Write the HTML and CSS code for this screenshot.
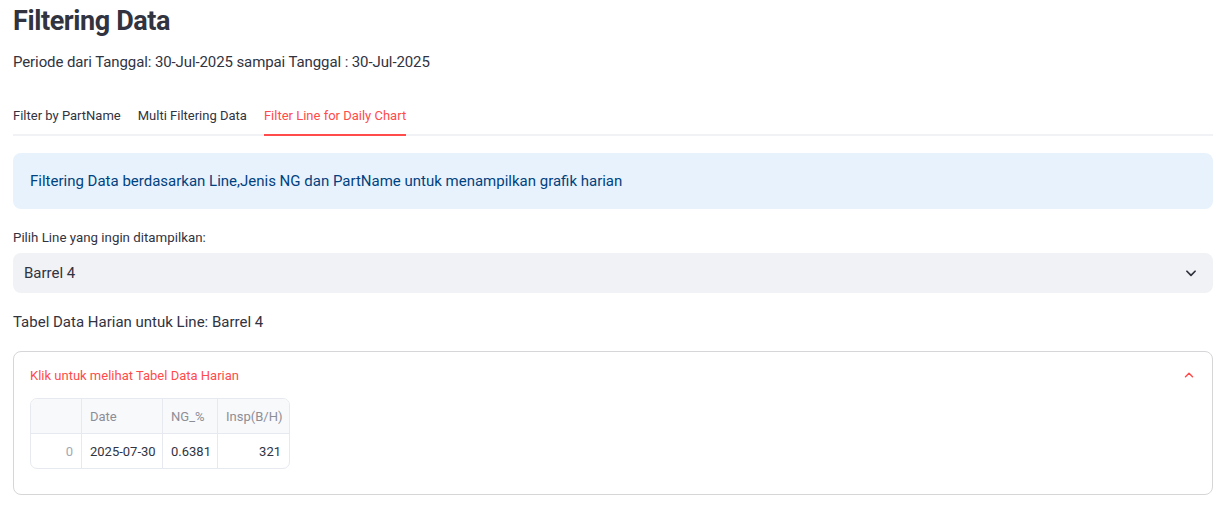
FILE: index.html
```html
<!DOCTYPE html>
<html lang="en">
<head>
    <meta charset="UTF-8">
    <meta name="viewport" content="width=device-width, initial-scale=1.0">
    <title>Filtering Data</title>
    <link rel="stylesheet" href="styles.css">
</head>
<body>
    <div class="main">
        <h1 class="title">Filtering Data</h1>
        <p class="period">Periode dari Tanggal: 30-Jul-2025 sampai Tanggal : 30-Jul-2025</p>

        <div class="tabs">
            <span class="tab">Filter by PartName</span>
            <span class="tab">Multi Filtering Data</span>
            <span class="tab active">Filter Line for Daily Chart</span>
        </div>

        <div class="info">Filtering Data berdasarkan Line,Jenis NG dan PartName untuk menampilkan grafik harian</div>

        <label class="label">Pilih Line yang ingin ditampilkan:</label>
        <div class="select">
            <span>Barrel 4</span>
            <svg width="14" height="14" viewBox="0 0 24 24"><path d="M5 9l7 7 7-7" fill="none" stroke="#31333f" stroke-width="3" stroke-linecap="round" stroke-linejoin="round"/></svg>
        </div>

        <p class="subtitle">Tabel Data Harian untuk Line: Barrel 4</p>

        <div class="expander">
            <div class="exp-head">
                <span>Klik untuk melihat Tabel Data Harian</span>
                <svg width="14" height="14" viewBox="0 0 24 24"><path d="M6 15l6-6 6 6" fill="none" stroke="#ff4b4b" stroke-width="2.5" stroke-linecap="round" stroke-linejoin="round"/></svg>
            </div>
            <table class="grid">
                <tr>
                    <th class="idx"></th>
                    <th class="c-date">Date</th>
                    <th class="c-ng">NG_%</th>
                    <th class="c-insp">Insp(B/H)</th>
                </tr>
                <tr>
                    <td class="idx num">0</td>
                    <td>2025-07-30</td>
                    <td>0.6381</td>
                    <td class="num">321</td>
                </tr>
            </table>
        </div>
    </div>
</body>
</html>
```

FILE: styles.css
```css
body {
    margin: 0;
    background-color: #FFFFFF;
    color: #31333F;
    font-family: Roboto, "Liberation Sans", sans-serif;
}
.main {
    width: 1200px;
    padding: 0 13px;
}
.title {
    font-size: 27px;
    letter-spacing: -0.4px;
    font-weight: 700;
    margin: 4px 0 0 0;
    height: 34px;
    line-height: 34px;
}
.period {
    font-size: 15px;
    letter-spacing: -0.1px;
    margin: 14px 0 0 0;
    line-height: 20px;
}
.tabs {
    display: flex;
    gap: 17px;
    margin-top: 28px;
    border-bottom: 2px solid #F0F2F6;
    height: 34px;
}
.tab {
    font-size: 13px;
    line-height: 28px;
    padding-top: 2px;
}
.tab.active {
    color: #FF4B4B;
    border-bottom: 2px solid #FF4B4B;
    margin-bottom: -2px;
}
.info {
    margin-top: 17px;
    height: 56px;
    line-height: 56px;
    padding: 0 17px;
    background-color: #E8F2FC;
    color: #004280;
    font-size: 15px;
    border-radius: 8px;
    box-sizing: border-box;
}
.label {
    display: block;
    font-size: 13.3px;
    line-height: 20px;
    margin-top: 19px;
}
.select {
    margin-top: 5px;
    height: 40px;
    background-color: #F0F2F6;
    border-radius: 8px;
    display: flex;
    align-items: center;
    justify-content: space-between;
    padding: 0 15px 0 11px;
    font-size: 15px;
}
.subtitle {
    font-size: 15px;
    line-height: 20px;
    margin: 19px 0 0 0;
}
.expander {
    margin-top: 19px;
    border: 1px solid #D6D6D9;
    border-radius: 8px;
    padding: 0 16px 25px 16px;
}
.exp-head {
    display: flex;
    justify-content: space-between;
    align-items: center;
    height: 46px;
    color: #FF4B4B;
    font-size: 13px;
}
.grid {
    table-layout: fixed;
    width: 260px;
    border-collapse: separate;
    border-spacing: 0;
    border: 1px solid #E6E9EF;
    border-radius: 7px;
    font-size: 13px;
    overflow: hidden;
}
.grid th {
    background-color: #F8F9FB;
    color: #8C8E96;
    font-weight: 400;
    text-align: left;
    height: 35px;
    padding: 0 8px;
    box-sizing: border-box;
    border-bottom: 1px solid #E6E9EF;
    border-right: 1px solid #E6E9EF;
}
.grid td {
    height: 34px;
    padding: 0 8px;
    white-space: nowrap;
    border-right: 1px solid #E6E9EF;
}
.grid th:last-child, .grid td:last-child {
    border-right: none;
}
.grid .idx {
    width: 51px;
}
.grid td.idx {
    color: #A3A8B4;
}
.num {
    text-align: right;
}
.grid .c-date {
    width: 81px;
    padding-right: 4px;
}
.grid .c-ng {
    width: 55px;
}
.grid .c-insp {
    width: 71px;
}
```
